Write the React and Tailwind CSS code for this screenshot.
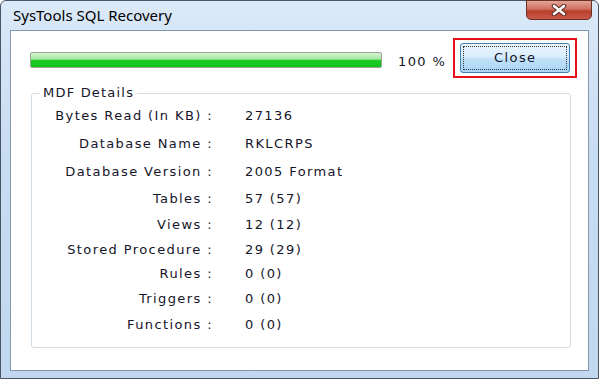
import React from "react";

const rows = [
  { label: "Bytes Read (In KB) :", value: "27136", h: "h-[29px]" },
  { label: "Database Name :", value: "RKLCRPS", h: "h-[28px]" },
  { label: "Database Version :", value: "2005 Format", h: "h-[28px]" },
  { label: "Tables :", value: "57 (57)", h: "h-[26px]" },
  { label: "Views :", value: "12 (12)", h: "h-[26px]" },
  { label: "Stored Procedure :", value: "29 (29)", h: "h-[24px]" },
  { label: "Rules :", value: "0 (0)", h: "h-[24px]" },
  { label: "Triggers :", value: "0 (0)", h: "h-[26px]" },
  { label: "Functions :", value: "0 (0)", h: "h-[25px]" },
];

const CloseX = () => (
  <svg width="16" height="12" viewBox="0 0 16 12">
    <path d="M3 2 L13 10 M13 2 L3 10" stroke="#5a2a22" strokeWidth="4.5" strokeLinecap="round" />
    <path d="M3 2 L13 10 M13 2 L3 10" stroke="#ffffff" strokeWidth="2.6" strokeLinecap="round" />
  </svg>
);

export default function App() {
  return (
    <div className="w-[600px] h-[380px] bg-white">
      <div className="w-[599px] h-[379px] flex flex-col rounded-t-[6px] border border-[#4a5564] bg-[linear-gradient(to_bottom,#dbe9f8_0%,#c8dcf2_40%,#c2d8f0_100%)] font-['DejaVu_Sans',Verdana,sans-serif] text-[#15152a] tracking-[1.4px]">
        {/* title bar */}
        <div className="h-[29px] flex items-start justify-between tracking-normal">
          <div className="pl-[12px] pt-[5px] text-[15px] leading-[18px] text-black font-['Noto_Sans',sans-serif]">
            SysTools SQL Recovery
          </div>
          <div className="mr-[6px] -mt-px w-[66px] h-[20px] flex items-center justify-center rounded-b-[5px] border border-[#6b3128] bg-[linear-gradient(to_bottom,#e3a597_0%,#d06f5e_45%,#b8402c_55%,#c9584a_100%)]">
            <CloseX />
          </div>
        </div>

        {/* client area */}
        <div className="mx-[9px] h-[341px] border border-[#8397ad] bg-white flex flex-col">
          <div className="flex items-start pl-[19px] pt-[7px]">
            <div className="mt-[14px] w-[352px] h-[16px] rounded-[2px] border border-[#9aa29a] bg-[linear-gradient(to_bottom,#d5f5d0_0%,#a9e6a2_45%,#1ecb27_50%,#12c21c_100%)]" />
            <div className="mt-[15px] ml-[16px] text-[13px] leading-[18px]">100 %</div>
            <div className="ml-[7px] w-[124px] h-[40px] border-2 border-[#e5101a] flex items-center justify-center">
              <div className="w-[110px] h-[30px] rounded-[3px] border border-[#3c7fb1] bg-[linear-gradient(to_bottom,#eaf5fd_0%,#d9edfc_45%,#bfe0f8_55%,#a9d4f4_100%)] p-[2px]">
                <div className="w-full h-full border border-dotted border-[#333] flex items-center justify-center text-[13px]">
                  Close
                </div>
              </div>
            </div>
          </div>

          <fieldset className="mt-[7px] ml-[20px] mr-[17px] border border-[#d3dde6] rounded-[3px] pb-[10px]">
            <legend className="ml-[8px] px-[3px] text-[13px] leading-[16px] tracking-[1.2px]">MDF Details</legend>
            {rows.map((r) => (
              <div key={r.label} className={`${r.h} flex items-center text-[13px]`}>
                <div className="w-[181px] text-right whitespace-nowrap">{r.label}</div>
                <div className="ml-[32px] whitespace-nowrap">{r.value}</div>
              </div>
            ))}
          </fieldset>
        </div>
      </div>
    </div>
  );
}
